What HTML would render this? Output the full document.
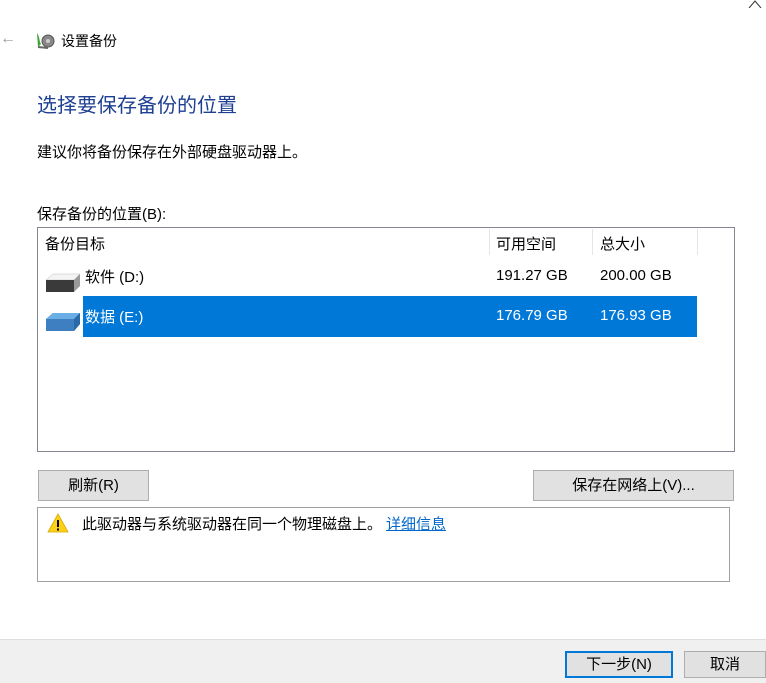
<!DOCTYPE html>
<html><head><meta charset="utf-8"><style>
*{margin:0;padding:0;box-sizing:border-box}
body{width:766px;height:683px;background:#fff;font-family:"Liberation Sans","Noto Sans CJK SC",sans-serif;font-size:15px;color:#000;position:relative;overflow:hidden}
.a{position:absolute;white-space:nowrap}
.btn{position:absolute;background:#e1e1e1;border:1px solid #adadad;text-align:center;font-size:15px}
</style></head><body>
<svg class="a" style="left:748px;top:0" width="14" height="8" viewBox="0 0 14 8"><path d="M1 8 L7 1 L13 8" stroke="#333" stroke-width="1" fill="none"/></svg>
<div class="a" style="left:0;top:30px;color:#999;font-size:16px">←</div>
<svg class="a" style="left:34px;top:29px" width="22" height="22" viewBox="0 0 22 22">
<path d="M3 4 C6 8 5 12 7 15 L4 18 Z" fill="#3fa535"/>
<circle cx="14" cy="12" r="6" fill="#888" stroke="#555"/>
<circle cx="14" cy="12" r="2" fill="#ccc"/>
<path d="M4 18 L14 19" stroke="#666" stroke-width="2"/>
</svg>
<div class="a" style="left:61px;top:31px;font-size:14px">设置备份</div>
<div class="a" style="left:37px;top:89px;font-size:20px;color:#1e3f92">选择要保存备份的位置</div>
<div class="a" style="left:37px;top:141px">建议你将备份保存在外部硬盘驱动器上。</div>
<div class="a" style="left:37px;top:203px">保存备份的位置(B):</div>
<div class="a" style="left:37px;top:227px;width:698px;height:225px;border:1px solid #828790"></div>
<div class="a" style="left:45px;top:233px">备份目标</div>
<div class="a" style="left:489px;top:229px;width:1px;height:26px;background:#e5e5e5"></div>
<div class="a" style="left:592px;top:229px;width:1px;height:26px;background:#e5e5e5"></div>
<div class="a" style="left:697px;top:229px;width:1px;height:26px;background:#e5e5e5"></div>
<div class="a" style="left:496px;top:233px">可用空间</div>
<div class="a" style="left:600px;top:233px">总大小</div>
<svg class="a" style="left:44px;top:270px" width="38" height="26" viewBox="0 0 38 26">
<path d="M2 10 L9 4 L36 4 L36 16 L2 22 Z" fill="#e8e8e8"/>
<path d="M2 10 L30 10 L36 4 L9 4 Z" fill="#f4f4f4" stroke="#bbb" stroke-width=".5"/>
<path d="M2 10 L30 10 L30 22 L2 22 Z" fill="#3a3a3a"/>
<path d="M30 10 L36 4 L36 16 L30 22 Z" fill="#999"/>
</svg>
<div class="a" style="left:85px;top:266px">软件 (D:)</div>
<div class="a" style="left:496px;top:267px">191.27 GB</div>
<div class="a" style="left:600px;top:267px">200.00 GB</div>
<div class="a" style="left:83px;top:296px;width:614px;height:41px;background:#0078d7"></div>
<svg class="a" style="left:44px;top:311px" width="38" height="22" viewBox="0 0 38 22">
<path d="M2 8 L9 2 L36 2 L36 13 L30 20 L2 20 Z" fill="#3d7fc0"/>
<path d="M2 8 L30 8 L36 2 L9 2 Z" fill="#6aaee6"/>
<path d="M30 8 L36 2 L36 13 L30 20 Z" fill="#2b6aa8"/>
</svg>
<div class="a" style="left:85px;top:306px;color:#fff">数据 (E:)</div>
<div class="a" style="left:496px;top:307px;color:#fff">176.79 GB</div>
<div class="a" style="left:600px;top:307px;color:#fff">176.93 GB</div>
<div class="btn" style="left:38px;top:470px;width:111px;height:31px;line-height:29px">刷新(R)</div>
<div class="btn" style="left:533px;top:470px;width:201px;height:31px;line-height:29px">保存在网络上(V)...</div>
<div class="a" style="left:37px;top:507px;width:693px;height:75px;border:1px solid #a0a0a0"></div>
<svg class="a" style="left:47px;top:513px" width="22" height="20" viewBox="0 0 22 20">
<path d="M11 1 L21 19 L1 19 Z" fill="#fcd116" stroke="#d9a800" stroke-width=".8"/>
<rect x="10" y="7" width="2" height="7" fill="#000"/><rect x="10" y="15.5" width="2" height="2" fill="#000"/>
</svg>
<div class="a" style="left:82px;top:513px">此驱动器与系统驱动器在同一个物理磁盘上。</div>
<div class="a" style="left:386px;top:513px;color:#0066cc;text-decoration:underline">详细信息</div>
<div class="a" style="left:0;top:639px;width:766px;height:44px;background:#f0f0f0;border-top:1px solid #dfdfdf"></div>
<div class="btn" style="left:565px;top:651px;width:108px;height:27px;line-height:23px;border:2px solid #0078d7">下一步(N)</div>
<div class="btn" style="left:684px;top:651px;width:82px;height:27px;line-height:25px">取消</div>
</body></html>
